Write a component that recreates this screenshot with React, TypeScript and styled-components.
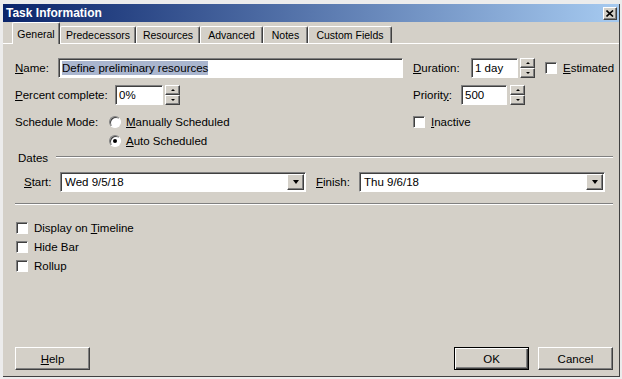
import React from 'react';
import styled, { createGlobalStyle, css } from 'styled-components';

const GlobalStyle = createGlobalStyle`
  html, body {
    margin: 0;
    padding: 0;
    background: #ececec;
  }
  body {
    font-family: "Liberation Sans", Arial, sans-serif;
    font-size: 11.5px;
    color: #000;
  }
`;

// classic 3d edges
const raised = css`
  border-style: solid;
  border-width: 1px;
  border-color: #fff #404040 #404040 #fff;
  box-shadow: inset -1px -1px #808080;
`;
const sunken = css`
  border-style: solid;
  border-width: 1px;
  border-color: #808080 #fff #fff #808080;
  box-shadow: inset 1px 1px #404040;
`;

const Dialog = styled.div`
  margin: 4px 0 0 3px;
  width: 617px;
  height: 373px;
  box-sizing: border-box;
  background: #d4d0c8;
  border-right: 1px solid #404040;
  border-bottom: 1px solid #404040;
  display: flex;
  flex-direction: column;
`;

const TitleBar = styled.div`
  height: 18px;
  flex: none;
  display: flex;
  align-items: center;
  justify-content: space-between;
  padding: 0 2px 0 3px;
  background: linear-gradient(to right, #0a246a, #a6caf0);
`;

const Title = styled.span`
  color: #fff;
  font-weight: bold;
  font-size: 12px;
`;

const CloseButton = styled.div`
  width: 14px;
  height: 13px;
  box-sizing: border-box;
  background: #d4d0c8;
  ${raised};
  display: flex;
  align-items: center;
  justify-content: center;
`;

const TabStrip = styled.div`
  height: 21px;
  flex: none;
  display: flex;
  align-items: flex-end;
  padding-left: 9px;
`;

const Tab = styled.div<{ $w: number; $active?: boolean }>`
  width: ${p => p.$w}px;
  height: 17px;
  box-sizing: border-box;
  border-top: 1px solid #fff;
  border-left: 1px solid #fff;
  border-right: 1px solid #404040;
  box-shadow: inset -1px 0 #808080;
  border-radius: 2px 2px 0 0;
  background: #d4d0c8;
  font-size: 10.5px;
  display: flex;
  justify-content: center;
  align-items: center;
  white-space: nowrap;
  ${p =>
    p.$active &&
    css`
      height: 22px;
      margin-bottom: -1px;
      align-items: flex-start;
      padding-top: 5px;
      position: relative;
      z-index: 1;
    `}
`;

const Panel = styled.div`
  flex: 1;
  display: flex;
  flex-direction: column;
  border-top: 1px solid #fff;
  padding: 14px 6px 6px 12px;
`;

const TopGrid = styled.div`
  display: grid;
  grid-template-columns: 398px 1fr;
  grid-template-rows: 20px 20px 38px;
  row-gap: 7px;
`;

const Cell = styled.div`
  display: flex;
  align-items: center;
`;

const TopCell = styled.div`
  display: flex;
  align-items: flex-start;
`;

const Label = styled.span<{ $w?: number; $ml?: number }>`
  width: ${p => (p.$w ? `${p.$w}px` : 'auto')};
  margin-left: ${p => p.$ml || 0}px;
  flex: none;
  white-space: nowrap;
`;

const LineLabel = styled(Label)`
  height: 19px;
  display: flex;
  align-items: center;
`;

const TextBox = styled.div<{ $w: number }>`
  width: ${p => p.$w}px;
  height: 20px;
  box-sizing: border-box;
  background: #fff;
  ${sunken};
  padding-left: 3px;
  display: flex;
  align-items: center;
  white-space: nowrap;
  flex: none;
`;

const Selected = styled.span`
  background: #aab6cf;
  padding: 1px 0;
`;

const Spin = styled.div<{ $gap: number }>`
  margin-left: ${p => p.$gap}px;
  width: 15px;
  height: 20px;
  display: flex;
  flex-direction: column;
  flex: none;
`;

const SpinHalf = styled.div<{ $down?: boolean }>`
  height: 10px;
  box-sizing: border-box;
  background: #d4d0c8;
  ${raised};
  display: flex;
  align-items: center;
  justify-content: center;
  &::after {
    content: '';
    border-left: 2px solid transparent;
    border-right: 2px solid transparent;
    ${p =>
      p.$down
        ? 'border-top: 2px solid #000;'
        : 'border-bottom: 2px solid #000;'}
  }
`;

const Check = styled.div<{ $gap?: number }>`
  width: 12px;
  height: 12px;
  box-sizing: border-box;
  background: #fff;
  ${sunken};
  margin-left: ${p => p.$gap || 0}px;
  margin-right: 6px;
  flex: none;
`;

const RadioGroup = styled.div`
  display: flex;
  flex-direction: column;
`;

const RadioLine = styled.div`
  height: 19px;
  display: flex;
  align-items: center;
`;

const Radio = styled.div<{ $on?: boolean }>`
  width: 12px;
  height: 12px;
  box-sizing: border-box;
  border-radius: 50%;
  background: #fff;
  border: 1px solid;
  border-color: #808080 #fff #fff #808080;
  box-shadow: inset 1px 1px #404040;
  margin-right: 5px;
  display: flex;
  align-items: center;
  justify-content: center;
  &::after {
    content: '';
    width: 4px;
    height: 4px;
    border-radius: 50%;
    background: ${p => (p.$on ? '#000' : 'transparent')};
  }
`;

const GroupHeader = styled.div`
  margin-top: 1px;
  height: 14px;
  padding-left: 3px;
  display: flex;
  align-items: center;
`;

const GroupLine = styled.div`
  flex: 1;
  margin-left: 8px;
  margin-top: -2px;
  border-top: 1px solid #808080;
  border-bottom: 1px solid #fff;
`;

const DateRow = styled.div`
  margin-top: 7px;
  padding-left: 9px;
  height: 20px;
  display: flex;
  align-items: center;
`;

const Combo = styled.div<{ $w: number }>`
  width: ${p => p.$w}px;
  height: 20px;
  box-sizing: border-box;
  background: #fff;
  ${sunken};
  padding: 1px 1px 1px 4px;
  display: flex;
  align-items: center;
  justify-content: space-between;
  flex: none;
`;

const ComboButton = styled.div`
  width: 17px;
  height: 16px;
  box-sizing: border-box;
  background: #d4d0c8;
  ${raised};
  display: flex;
  align-items: center;
  justify-content: center;
  &::after {
    content: '';
    border-left: 3.5px solid transparent;
    border-right: 3.5px solid transparent;
    border-top: 4px solid #000;
  }
`;

const Separator = styled.div`
  margin-top: 11px;
  border-top: 1px solid #808080;
  border-bottom: 1px solid #fff;
`;

const CheckList = styled.div`
  margin-top: 13px;
  display: flex;
  flex-direction: column;
`;

const CheckRow = styled.div`
  height: 19px;
  display: flex;
  align-items: center;
  padding-left: 1px;
`;

const ButtonBar = styled.div`
  margin-top: auto;
  display: flex;
  justify-content: space-between;
  align-items: center;
`;

const ButtonGroup = styled.div`
  display: flex;
  gap: 9px;
`;

const DialogButton = styled.div<{ $default?: boolean }>`
  width: 75px;
  height: 23px;
  box-sizing: border-box;
  background: #d4d0c8;
  display: flex;
  align-items: center;
  justify-content: center;
  ${raised};
  ${p =>
    p.$default &&
    css`
      border: 1px solid #000;
      box-shadow: inset 1px 1px #fff, inset -1px -1px #404040, inset -2px -2px #808080;
    `}
`;

function SpinBox({ w, gap, value }: { w: number; gap: number; value: string }) {
  return (
    <>
      <TextBox $w={w}>{value}</TextBox>
      <Spin $gap={gap}>
        <SpinHalf />
        <SpinHalf $down />
      </Spin>
    </>
  );
}

const tabs = [
  { name: 'General', w: 48, active: true },
  { name: 'Predecessors', w: 76 },
  { name: 'Resources', w: 64 },
  { name: 'Advanced', w: 63 },
  { name: 'Notes', w: 45 },
  { name: 'Custom Fields', w: 84 },
];

export default function App() {
  return (
    <>
      <GlobalStyle />
      <Dialog>
        <TitleBar>
          <Title>Task Information</Title>
          <CloseButton>
            <svg width="8" height="7" viewBox="0 0 8 7">
              <path d="M0.5 0.5 L7 6.5 M7 0.5 L0.5 6.5" stroke="#000" strokeWidth="1.6" />
            </svg>
          </CloseButton>
        </TitleBar>
        <TabStrip>
          {tabs.map(t => (
            <Tab key={t.name} $w={t.w} $active={t.active}>
              {t.name}
            </Tab>
          ))}
        </TabStrip>
        <Panel>
          <TopGrid>
            <Cell>
              <Label $w={43}><u>N</u>ame:</Label>
              <TextBox $w={345}>
                <Selected>Define preliminary resources</Selected>
              </TextBox>
            </Cell>
            <Cell>
              <Label $w={58}><u>D</u>uration:</Label>
              <SpinBox w={47} gap={2} value="1 day" />
              <Check $gap={10} />
              <Label><u>E</u>stimated</Label>
            </Cell>
            <Cell>
              <Label $w={100}><u>P</u>ercent complete:</Label>
              <SpinBox w={48} gap={2} value="0%" />
            </Cell>
            <Cell>
              <Label $w={48}>Priorit<u>y</u>:</Label>
              <SpinBox w={46} gap={3} value="500" />
            </Cell>
            <TopCell>
              <LineLabel $w={94}>Schedule Mode:</LineLabel>
              <RadioGroup>
                <RadioLine>
                  <Radio />
                  <span><u>M</u>anually Scheduled</span>
                </RadioLine>
                <RadioLine>
                  <Radio $on />
                  <span><u>A</u>uto Scheduled</span>
                </RadioLine>
              </RadioGroup>
            </TopCell>
            <TopCell>
              <RadioLine>
                <Check />
                <span><u>I</u>nactive</span>
              </RadioLine>
            </TopCell>
          </TopGrid>

          <GroupHeader>
            <span>Dates</span>
            <GroupLine />
          </GroupHeader>
          <DateRow>
            <Label $w={36}><u>S</u>tart:</Label>
            <Combo $w={246}>
              <span>Wed 9/5/18</span>
              <ComboButton />
            </Combo>
            <Label $w={43} $ml={10}><u>F</u>inish:</Label>
            <Combo $w={246}>
              <span>Thu 9/6/18</span>
              <ComboButton />
            </Combo>
          </DateRow>
          <Separator />

          <CheckList>
            <CheckRow>
              <Check />
              <span>Display on <u>T</u>imeline</span>
            </CheckRow>
            <CheckRow>
              <Check />
              <span>Hide Bar</span>
            </CheckRow>
            <CheckRow>
              <Check />
              <span>Rollup</span>
            </CheckRow>
          </CheckList>

          <ButtonBar>
            <DialogButton><span><u>H</u>elp</span></DialogButton>
            <ButtonGroup>
              <DialogButton $default>OK</DialogButton>
              <DialogButton>Cancel</DialogButton>
            </ButtonGroup>
          </ButtonBar>
        </Panel>
      </Dialog>
    </>
  );
}
